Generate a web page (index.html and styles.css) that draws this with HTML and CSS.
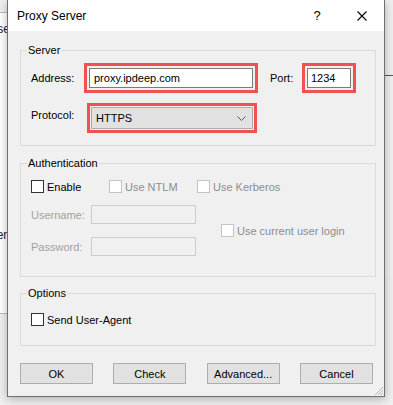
FILE: index.html
```html
<!DOCTYPE html>
<html lang="en">
<head>
    <meta charset="UTF-8">
    <meta name="viewport" content="width=device-width, initial-scale=1.0">
    <title>Proxy Server</title>
    <link rel="stylesheet" href="styles.css">
</head>
<body>
    <div class="backwin left-win">
        <div class="back-line first">se</div>
        <div class="back-line second">en</div>
    </div>
    <div class="backwin right-win"></div>

    <div class="dialog">
        <div class="titlebar">
            <span class="title">Proxy Server</span>
            <span class="tb-btn help">?</span>
            <span class="tb-btn close">
                <svg width="10" height="10" viewBox="0 0 10 10"><path d="M0.5 0.5L9.5 9.5M9.5 0.5L0.5 9.5" stroke="#000" stroke-width="1.1" fill="none"/></svg>
            </span>
        </div>

        <div class="content">
            <fieldset class="group server">
                <legend>Server</legend>
                <div class="row">
                    <label class="lbl" for="address">Address:</label>
                    <div class="hl"><input id="address" class="text address" value="proxy.ipdeep.com"></div>
                    <label class="lbl port-lbl" for="port">Port:</label>
                    <div class="hl"><input id="port" class="text port" value="1234"></div>
                </div>
                <div class="row second-row">
                    <label class="lbl proto-lbl">Protocol:</label>
                    <div class="hl hl-select">
                        <div class="select">
                            <span>HTTPS</span>
                            <svg width="9" height="5" viewBox="0 0 9 5"><path d="M0.5 0.5L4.5 4.5L8.5 0.5" stroke="#555" fill="none"/></svg>
                        </div>
                    </div>
                </div>
            </fieldset>

            <fieldset class="group auth">
                <legend>Authentication</legend>
                <div class="checks">
                    <div class="check w-enable"><span class="box"></span>Enable</div>
                    <div class="check w-ntlm disabled"><span class="box"></span>Use NTLM</div>
                    <div class="check disabled"><span class="box"></span>Use Kerberos</div>
                </div>
                <div class="fields">
                    <div class="field-col">
                        <div class="field">
                            <span class="lbl-dis">Username:</span>
                            <span class="text-dis"></span>
                        </div>
                        <div class="field pw">
                            <span class="lbl-dis">Password:</span>
                            <span class="text-dis"></span>
                        </div>
                    </div>
                    <div class="check disabled current"><span class="box"></span>Use current user login</div>
                </div>
            </fieldset>

            <fieldset class="group options">
                <legend>Options</legend>
                <div class="check"><span class="box"></span>Send User-Agent</div>
            </fieldset>

            <div class="buttons">
                <button>OK</button>
                <button>Check</button>
                <button>Advanced...</button>
                <button>Cancel</button>
            </div>
        </div>

        <svg class="grip" width="10" height="10" viewBox="0 0 10 10">
            <path d="M9 1L1 9M9 4L4 9M9 7L7 9" stroke="#b4b4b4" fill="none"/>
        </svg>
    </div>
</body>
</html>
```

FILE: styles.css
```css
body {
    margin: 0;
    height: 405px;
    overflow: hidden;
    position: relative;
    background-color: #efefef;
    font-family: "Liberation Sans", Arial, sans-serif;
    font-size: 11px;
    color: #000;
}
.backwin {
    position: absolute;
    background-color: #fff;
}
.left-win {
    left: -80px;
    top: 12px;
    width: 86px;
    height: 300px;
    border: 1px solid #bbb;
}
.back-line {
    text-align: right;
    font-size: 12px;
    color: #222;
    margin-right: -3px;
}
.back-line.first {
    margin-top: 9px;
}
.back-line.second {
    margin-top: 192px;
}
.right-win {
    left: 385px;
    top: 75px;
    width: 20px;
    height: 200px;
    background-color: #f0f0f0;
    border-top: 1px solid #555;
}
.dialog {
    position: relative;
    z-index: 1;
    margin-left: 7px;
    width: 378px;
    height: 397px;
    box-sizing: border-box;
    border: 1px solid #6f6f6f;
    border-top: none;
    background-color: #f0f0f0;
    box-shadow: 0 2px 9px rgba(0,0,0,0.28);
}
.titlebar {
    height: 31px;
    background-color: #fff;
    display: flex;
    align-items: center;
    padding-left: 9px;
}
.title {
    font-size: 12px;
    flex: 1;
}
.tb-btn {
    display: flex;
    justify-content: center;
    align-items: center;
    height: 31px;
}
.help {
    width: 46px;
    font-size: 13px;
}
.close {
    width: 44px;
}
.content {
    padding: 12px 8px 0 12px;
}
.group {
    margin: 0;
    border: 1px solid #dadada;
    min-width: 0;
    padding: 0 10px;
}
.group legend {
    margin-left: -4px;
    padding: 0 1px;
    line-height: 14px;
}
.server {
    padding-top: 6px;
    padding-bottom: 12px;
}
.row {
    display: flex;
    align-items: center;
}
.second-row {
    margin-top: 10px;
}
.lbl {
    width: 53px;
}
.proto-lbl {
    margin-bottom: 6px;
}
.port-lbl {
    width: 24px;
    margin-left: 12px;
    margin-right: 8px;
}
.hl {
    border: 3px solid #f05252;
    padding: 2px;
    background-color: #f0f0f0;
}
.text {
    box-sizing: border-box;
    height: 20px;
    margin: 0;
    border: 1px solid #7a7a7a;
    background-color: #fff;
    padding: 0 4px;
    font-family: inherit;
    font-size: 11px;
    color: #000;
    outline: none;
}
.address {
    width: 164px;
}
.port {
    width: 44px;
    padding-left: 3px;
}
.hl-select {
    margin-left: 3px;
    padding: 1px;
}
.select {
    box-sizing: border-box;
    width: 162px;
    height: 22px;
    border: 1px solid #adadad;
    background-color: #e1e1e1;
    display: flex;
    align-items: center;
    justify-content: space-between;
    padding: 0 6px 0 4px;
}
.auth {
    margin-top: 10px;
    padding-top: 8px;
    padding-bottom: 20px;
}
.checks {
    display: flex;
}
.check {
    display: flex;
    align-items: center;
    height: 17px;
}
.box {
    box-sizing: border-box;
    width: 13px;
    height: 13px;
    border: 1px solid #333;
    background-color: #fff;
    margin-right: 3px;
}
.disabled {
    color: #8d8d8d;
}
.disabled .box {
    border-color: #c4c4c4;
}
.w-enable {
    width: 78px;
}
.w-ntlm {
    width: 88px;
}
.fields {
    display: flex;
    align-items: center;
    margin-top: 10px;
}
.field {
    display: flex;
    align-items: center;
}
.field.pw {
    margin-top: 13px;
}
.lbl-dis {
    width: 60px;
    color: #a0a0a0;
}
.text-dis {
    box-sizing: border-box;
    width: 105px;
    height: 19px;
    border: 1px solid #cccccc;
    background-color: #f0f0f0;
}
.current {
    margin-left: 25px;
}
.options {
    margin-top: 9px;
    padding-top: 11px;
    padding-bottom: 17px;
}
.buttons {
    display: flex;
    justify-content: space-between;
    margin-top: 17px;
    padding-right: 3px;
}
button {
    width: 73px;
    height: 21px;
    margin: 0;
    padding: 0;
    border: 1px solid #adadad;
    background-color: #e1e1e1;
    font-family: inherit;
    font-size: 11px;
    color: #000;
}
.grip {
    position: absolute;
    right: 0;
    bottom: 0;
}
```
